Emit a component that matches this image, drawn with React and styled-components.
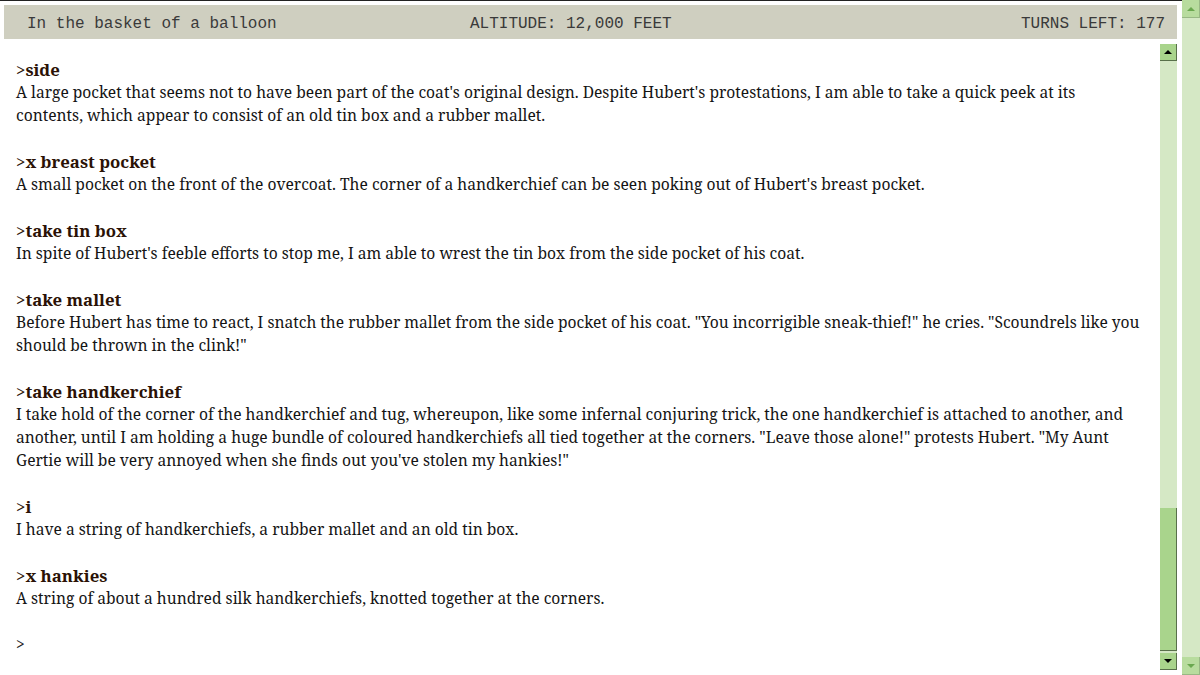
import React from 'react';
import styled, { createGlobalStyle } from 'styled-components';

const GlobalStyle = createGlobalStyle`
	html, body {
		margin: 0;
		padding: 0;
		background: #fff;
		overflow: hidden;
	}
`;

const Page = styled.div`
	display: flex;
	width: 1200px;
	height: 675px;
`;

const Main = styled.div`
	flex: 1;
	display: flex;
	flex-direction: column;
	gap: 5px;
	border-top: 1px solid #222;
	padding: 4px 5px 5px 4px;
	min-width: 0;
`;

const StatusBar = styled.div`
	display: grid;
	grid-template-columns: 443px auto 1fr;
	align-items: center;
	height: 34px;
	padding: 3px 12px 0 23px;
	box-sizing: border-box;
	background: #cfcfc0;
	color: #3a3a3a;
	font-family: "Liberation Mono", "Courier New", monospace;
	font-size: 16px;
	white-space: pre;
`;

const StatusRight = styled.span`
	text-align: right;
`;

const Viewport = styled.div`
	flex: 1;
	display: flex;
	min-height: 0;
`;

const Transcript = styled.div`
	flex: 1;
	overflow: hidden;
	padding: 14px 16px 0 12px;
	font-family: "Noto Serif", Georgia, serif;
	font-size: 15.6px;
	line-height: 23px;
	color: #141414;
`;

const Turn = styled.div`
	margin-bottom: 23px;
`;

const Command = styled.div`
	font-size: 16.8px;
	font-weight: bold;
	color: #2b1206;

	span {
		font-weight: normal;
	}
`;

const Reply = styled.div``;

const Prompt = styled.div`
	color: #222;
`;

const ScrollBar = styled.div`
	display: flex;
	flex-direction: column;
	width: ${p => p.$w}px;
	background: #d5e8c5;
`;

const ScrollButton = styled.div`
	display: flex;
	align-items: center;
	justify-content: center;
	height: ${p => p.$h}px;
	background: ${p => p.$disabled ? '#b8dc9e' : '#a9d48c'};
	border-right: 1px solid ${p => p.$disabled ? '#98b884' : '#58704a'};
	border-bottom: 1px solid ${p => p.$disabled ? '#98b884' : '#58704a'};
	box-sizing: border-box;

	&::after {
		content: '';
		border-left: 4px solid transparent;
		border-right: 4px solid transparent;
		${p => p.$down ? 'border-top' : 'border-bottom'}: 4px solid ${p => p.$disabled ? '#6aa84f' : '#000'};
	}
`;

const Track = styled.div`
	flex: 1;
	display: flex;
	flex-direction: column;
	justify-content: flex-end;
	padding-bottom: 2px;
`;

const Thumb = styled.div`
	height: ${p => p.$h}px;
	background: #a9d48c;
	border-right: 1px solid #58704a;
	border-bottom: 1px solid #58704a;
	box-sizing: border-box;
`;

const turns = [
	{
		cmd: 'side',
		text: "A large pocket that seems not to have been part of the coat's original design. Despite Hubert's protestations, I am able to take a quick peek at its contents, which appear to consist of an old tin box and a rubber mallet."
	},
	{
		cmd: 'x breast pocket',
		text: "A small pocket on the front of the overcoat. The corner of a handkerchief can be seen poking out of Hubert's breast pocket."
	},
	{
		cmd: 'take tin box',
		text: "In spite of Hubert's feeble efforts to stop me, I am able to wrest the tin box from the side pocket of his coat."
	},
	{
		cmd: 'take mallet',
		text: 'Before Hubert has time to react, I snatch the rubber mallet from the side pocket of his coat. "You incorrigible sneak-thief!" he cries. "Scoundrels like you should be thrown in the clink!"'
	},
	{
		cmd: 'take handkerchief',
		text: 'I take hold of the corner of the handkerchief and tug, whereupon, like some infernal conjuring trick, the one handkerchief is attached to another, and another, until I am holding a huge bundle of coloured handkerchiefs all tied together at the corners. "Leave those alone!" protests Hubert. "My Aunt Gertie will be very annoyed when she finds out you\'ve stolen my hankies!"'
	},
	{
		cmd: 'i',
		text: 'I have a string of handkerchiefs, a rubber mallet and an old tin box.'
	},
	{
		cmd: 'x hankies',
		text: 'A string of about a hundred silk handkerchiefs, knotted together at the corners.'
	}
];

export default function App() {
	return (
		<Page>
			<GlobalStyle />
			<Main>
				<StatusBar>
					<span>In the basket of a balloon</span>
					<span>ALTITUDE: 12,000 FEET</span>
					<StatusRight>TURNS LEFT: 177</StatusRight>
				</StatusBar>
				<Viewport>
					<Transcript>
						{turns.map(t => (
							<Turn key={t.cmd}>
								<Command><span>&gt;</span>{t.cmd}</Command>
								<Reply>{t.text}</Reply>
							</Turn>
						))}
						<Prompt>&gt;</Prompt>
					</Transcript>
					<ScrollBar $w={17}>
						<ScrollButton $h={17} />
						<Track>
							<Thumb $h={143} />
						</Track>
						<ScrollButton $h={17} $down />
					</ScrollBar>
				</Viewport>
			</Main>
			<ScrollBar $w={18}>
				<ScrollButton $h={18} $disabled />
				<Track />
				<ScrollButton $h={18} $down $disabled />
			</ScrollBar>
		</Page>
	);
}
